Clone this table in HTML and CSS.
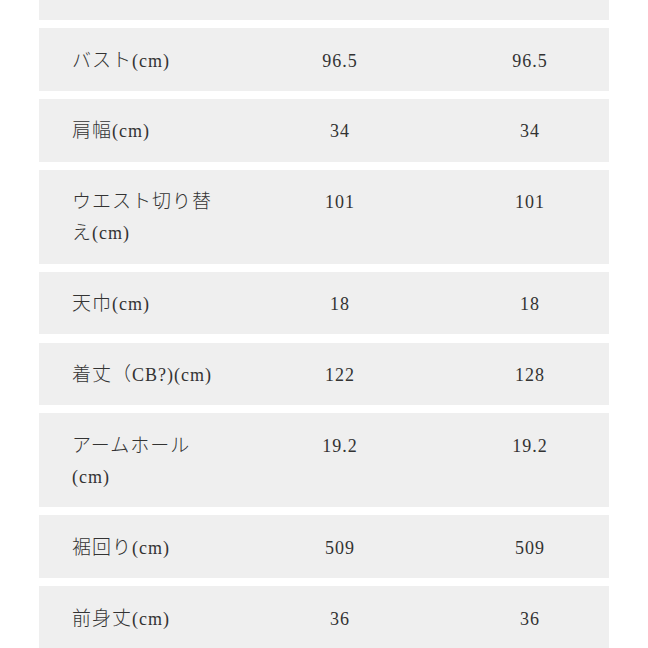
FILE: index.html
```html
<!DOCTYPE html>
<html lang="ja">
<head>
<meta charset="utf-8">
<title>サイズ表</title>
<link rel="stylesheet" href="styles.css">
</head>
<body>
<div class="table">
  <div class="row"><div class="label"></div><div class="val"></div><div class="val"></div></div>
  <div class="row"><div class="label"><span class="ja">バスト</span>(cm)</div><div class="val">96.5</div><div class="val">96.5</div></div>
  <div class="row"><div class="label"><span class="ja">肩幅</span>(cm)</div><div class="val">34</div><div class="val">34</div></div>
  <div class="row"><div class="label"><span class="ja">ウエスト切り替え</span>(cm)</div><div class="val">101</div><div class="val">101</div></div>
  <div class="row"><div class="label"><span class="ja">天巾</span>(cm)</div><div class="val">18</div><div class="val">18</div></div>
  <div class="row"><div class="label"><span class="ja">着丈（</span>CB?)(cm)</div><div class="val">122</div><div class="val">128</div></div>
  <div class="row"><div class="label"><span class="ja">アームホール</span>(cm)</div><div class="val">19.2</div><div class="val">19.2</div></div>
  <div class="row"><div class="label"><span class="ja">裾回り</span>(cm)</div><div class="val">509</div><div class="val">509</div></div>
  <div class="row"><div class="label"><span class="ja">前身丈</span>(cm)</div><div class="val">36</div><div class="val">36</div></div>
</div>
</body>
</html>
```
FILE: styles.css
```css
html, body {
  margin: 0;
  padding: 0;
  background: #ffffff;
}
body {
  width: 648px;
  height: 648px;
  overflow: hidden;
}
.table {
  display: flex;
  flex-direction: column;
  gap: 8.3px;
  margin: -42.5px 0 0 39px;
  width: 570px;
}
.row {
  display: grid;
  grid-template-columns: 153px 150px 150px;
  column-gap: 40px;
  align-items: start;
  background: #efefef;
  padding: 17.3px 0 14px 33px;
  min-height: 31.2px;
  font-family: "Liberation Serif", "Noto Sans CJK JP", serif;
  font-size: 18px;
  letter-spacing: 1px;
  line-height: 31.2px;
  color: #333333;
}
.label {
  min-height: 31.2px;
}
.ja {
  font-family: "Noto Sans CJK JP", sans-serif;
  font-size: 19px;
  font-weight: 300;
  letter-spacing: 1px;
  line-height: 18px;
}
.val {
  text-align: center;
}
```
